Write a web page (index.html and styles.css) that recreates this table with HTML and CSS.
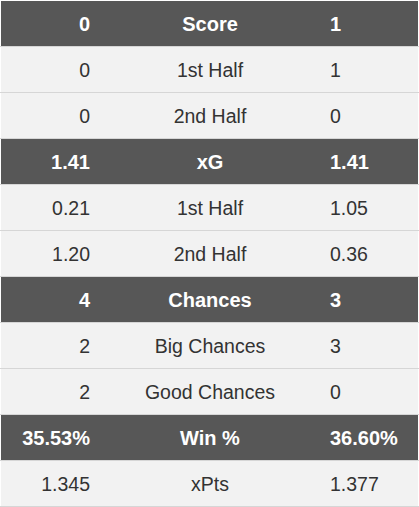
FILE: index.html
```html
<!DOCTYPE html>
<html>
<head>
<meta charset="utf-8">
<link rel="stylesheet" href="styles.css">
</head>
<body>
<table class="stats">
  <tr class="head"><td class="l">0</td><td class="c">Score</td><td class="r">1</td></tr>
  <tr><td class="l">0</td><td class="c">1st Half</td><td class="r">1</td></tr>
  <tr><td class="l">0</td><td class="c">2nd Half</td><td class="r">0</td></tr>
  <tr class="head"><td class="l">1.41</td><td class="c">xG</td><td class="r">1.41</td></tr>
  <tr><td class="l">0.21</td><td class="c">1st Half</td><td class="r">1.05</td></tr>
  <tr><td class="l">1.20</td><td class="c">2nd Half</td><td class="r">0.36</td></tr>
  <tr class="head"><td class="l">4</td><td class="c">Chances</td><td class="r">3</td></tr>
  <tr><td class="l">2</td><td class="c">Big Chances</td><td class="r">3</td></tr>
  <tr><td class="l">2</td><td class="c">Good Chances</td><td class="r">0</td></tr>
  <tr class="head"><td class="l">35.53%</td><td class="c">Win %</td><td class="r">36.60%</td></tr>
  <tr><td class="l">1.345</td><td class="c">xPts</td><td class="r">1.377</td></tr>
</table>
</body>
</html>
```
FILE: styles.css
```css
html, body {
  margin: 0;
  padding: 0;
  background: #ffffff;
}
.stats {
  width: 419px;
  border-collapse: collapse;
  border-top: 1px solid #ffffff;
  font-family: "Liberation Sans", Arial, sans-serif;
  font-size: 19.5px;
  color: #333333;
  table-layout: fixed;
}
.stats td {
  height: 44px;
  padding: 1px 0 0 0;
  border-bottom: 1px solid #d6d6d6;
  background: #f2f2f2;
  vertical-align: middle;
}
.stats td.l {
  width: 89px;
  padding-right: 10px;
  text-align: right;
  border-left: 1px solid #ffffff;
}
.stats td.c {
  text-align: center;
}
.stats td.r {
  width: 88px;
  padding-left: 10px;
  text-align: left;
  border-right: 1px solid #ffffff;
}
.stats tr.head td {
  background: #575757;
  color: #ffffff;
  font-weight: bold;
  font-size: 20px;
}
```
